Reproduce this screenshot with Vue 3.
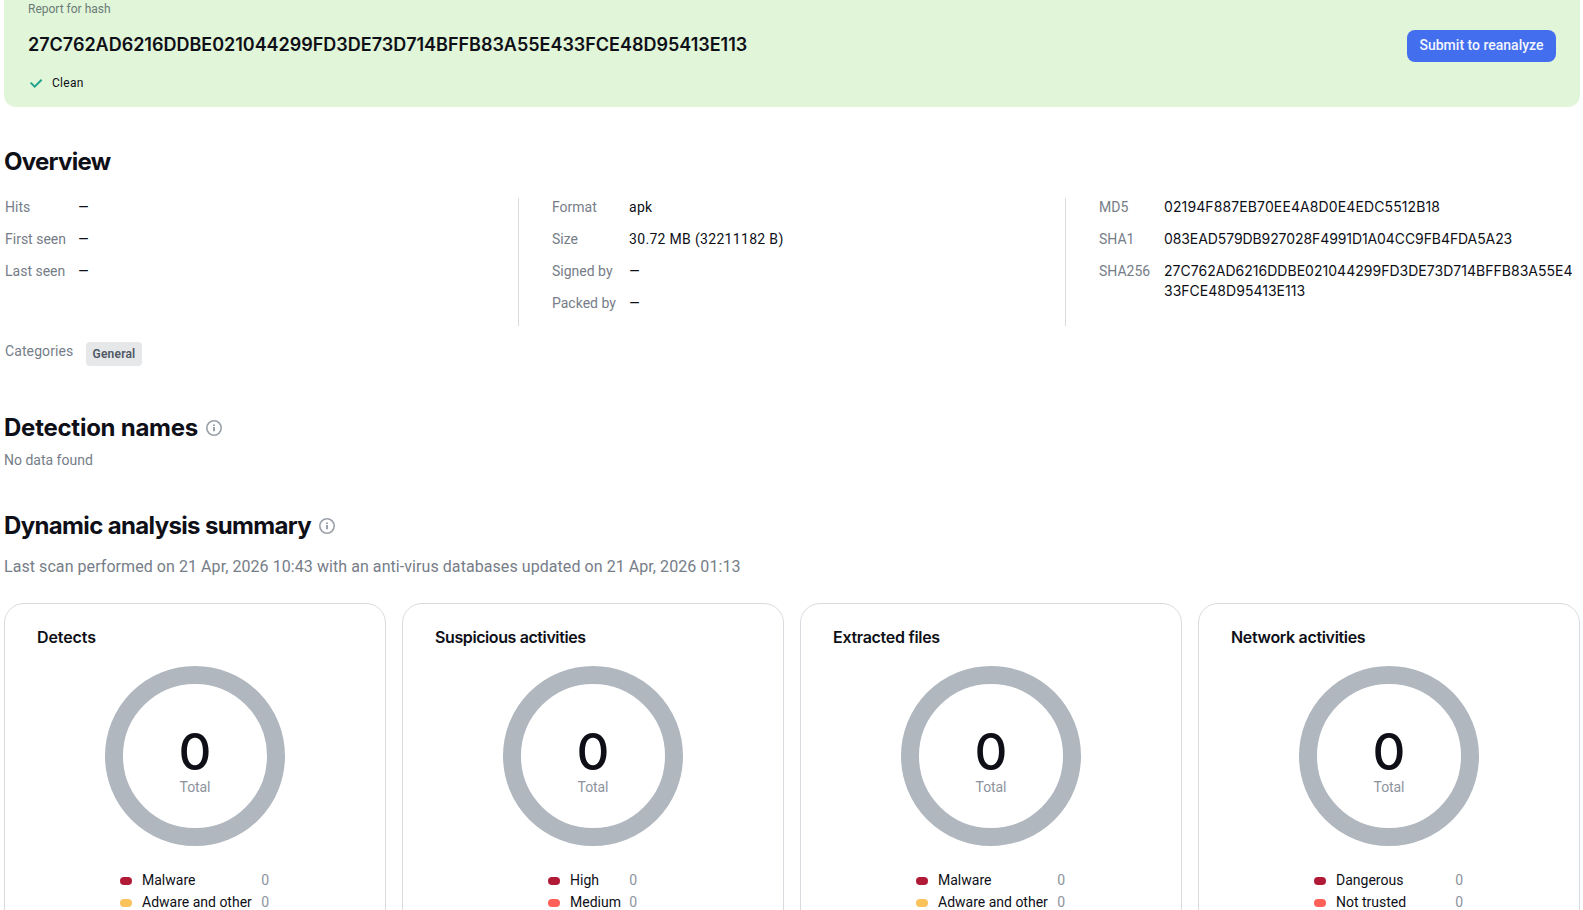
<template>
  <div class="page">
    <!-- 报告头部 -->
    <header class="report-header">
      <div class="report-info">
        <div class="report-label">Report for hash</div>
        <div class="report-hash">{{ hash }}</div>
        <div class="report-status">
          <svg class="check-icon" width="16" height="16" viewBox="0 0 16 16" fill="none">
            <path d="M2.6 7.6L6.7 11.6L13.6 4.8" stroke="#1fa38b" stroke-width="2" />
          </svg>
          <span>Clean</span>
        </div>
      </div>
      <button class="submit-btn">Submit to reanalyze</button>
    </header>

    <section class="overview">
      <h2 class="overview-title">Overview</h2>
      <div class="overview-columns">
        <dl v-for="(column, i) in overview" :key="i" class="column" :class="'column-' + (i + 1)">
          <div v-for="item in column" :key="item.label" class="row">
            <dt>{{ item.label }}</dt>
            <dd :class="{ checksum: item.spacing !== undefined }" :style="{ letterSpacing: item.spacing && item.spacing + 'px' }">
              <span v-if="item.value">{{ item.value }}</span>
              <span v-else class="empty">—</span>
            </dd>
          </div>
        </dl>
      </div>
      <div class="categories">
        <span class="categories-label">Categories</span>
        <span class="tag">General</span>
      </div>
    </section>

    <section class="detection">
      <div class="title-row">
        <h2 class="detection-title">Detection names</h2>
        <svg class="info-icon" width="16" height="16" viewBox="0 0 16 16" fill="none">
          <circle cx="8" cy="8" r="7.2" stroke="#9aa1aa" stroke-width="1.6" />
          <path d="M8 7V11.2M8 4.6V6" stroke="#9aa1aa" stroke-width="2" />
        </svg>
      </div>
      <p class="no-data">No data found</p>
    </section>

    <section class="dynamic">
      <div class="title-row">
        <h2 class="dynamic-title">Dynamic analysis summary</h2>
        <svg class="info-icon" width="16" height="16" viewBox="0 0 16 16" fill="none">
          <circle cx="8" cy="8" r="7.2" stroke="#9aa1aa" stroke-width="1.6" />
          <path d="M8 7V11.2M8 4.6V6" stroke="#9aa1aa" stroke-width="2" />
        </svg>
      </div>
      <p class="scan-info">
        Last scan performed on 21 Apr, 2026 10:43 with an anti-virus databases updated on 21 Apr, 2026 01:13
      </p>

      <div class="cards">
        <div v-for="card in cards" :key="card.title" class="card">
          <h3 class="card-title" :style="{ letterSpacing: card.spacing + 'px' }">{{ card.title }}</h3>
          <div class="donut">
            <span class="donut-value">{{ card.total }}</span>
            <span class="donut-label">Total</span>
          </div>
          <ul class="legend" :class="{ narrow: card.narrow }">
            <li v-for="item in card.items" :key="item.name">
              <i class="dot" :class="item.level"></i>
              <span class="legend-name">{{ item.name }}</span>
              <span class="legend-count">{{ item.count }}</span>
            </li>
          </ul>
        </div>
      </div>
    </section>
  </div>
</template>

<script setup>
const hash = '27C762AD6216DDBE021044299FD3DE73D714BFFB83A55E433FCE48D95413E113';

const overview = [
  [
    { label: 'Hits' },
    { label: 'First seen' },
    { label: 'Last seen' },
  ],
  [
    { label: 'Format', value: 'apk' },
    { label: 'Size', value: '30.72 MB (32211182 B)' },
    { label: 'Signed by' },
    { label: 'Packed by' },
  ],
  [
    { label: 'MD5', value: '02194F887EB70EE4A8D0E4EDC5512B18', spacing: 0.111 },
    { label: 'SHA1', value: '083EAD579DB927028F4991D1A04CC9FB4FDA5A23', spacing: -0.089 },
    { label: 'SHA256', value: hash, spacing: 0.021 },
  ],
];

const cards = [
  {
    title: 'Detects',
    total: 0,
    spacing: -0.1,
    items: [
      { name: 'Malware', count: 0, level: 'danger' },
      { name: 'Adware and other', count: 0, level: 'adware' },
    ],
  },
  {
    title: 'Suspicious activities',
    total: 0,
    spacing: -0.4,
    narrow: true,
    items: [
      { name: 'High', count: 0, level: 'danger' },
      { name: 'Medium', count: 0, level: 'medium' },
    ],
  },
  {
    title: 'Extracted files',
    total: 0,
    spacing: -0.3,
    items: [
      { name: 'Malware', count: 0, level: 'danger' },
      { name: 'Adware and other', count: 0, level: 'adware' },
    ],
  },
  {
    title: 'Network activities',
    total: 0,
    spacing: -0.33,
    items: [
      { name: 'Dangerous', count: 0, level: 'danger' },
      { name: 'Not trusted', count: 0, level: 'medium' },
    ],
  },
];
</script>

<style>
body {
  margin: 0;
  background: #fff;
  overflow: hidden;
}
</style>

<style scoped>
.page {
  box-sizing: border-box;
  width: 1583px;
  height: 910px;
  padding: 0 3px 0 4px;
  overflow: hidden;
  font-family: Roboto, 'Liberation Sans', sans-serif;
  font-size: 14px;
  line-height: 20px;
  color: #0e0f17;
}

h2,
h3,
p,
dl,
dd,
ul {
  margin: 0;
  padding: 0;
}

/* 头部 */
.report-header {
  box-sizing: border-box;
  display: flex;
  align-items: flex-start;
  justify-content: space-between;
  height: 107px;
  padding: 1px 24px 0;
  background: #e1f5d8;
  border-radius: 0 0 12px 12px;
}

.report-label {
  font-size: 12px;
  line-height: 16px;
  color: #6b7b78;
}

.report-hash {
  margin-top: 16px;
  font-family: Inter, Roboto, sans-serif;
  font-size: 18px;
  font-weight: 600;
  line-height: 24px;
  letter-spacing: -0.015px;
}

.report-status {
  display: flex;
  align-items: center;
  gap: 8px;
  margin-top: 18px;
  font-size: 12px;
  line-height: 16px;
  letter-spacing: 0.3px;
}

.submit-btn {
  width: 149px;
  height: 32px;
  margin-top: 29px;
  padding: 0 0 2px;
  border: none;
  border-radius: 8px;
  background: #436fee;
  color: #f2f5fe;
  font-family: inherit;
  font-size: 14px;
  font-weight: 500;
}

/* 概览 */
h2 {
  font-family: Inter, Roboto, sans-serif;
  font-size: 24px;
  font-weight: 650;
  line-height: 32px;
}

.overview-title {
  margin-top: 39px;
  letter-spacing: -0.72px;
}

.overview-columns {
  display: flex;
  margin-top: 20px;
}

.column {
  box-sizing: border-box;
  height: 128px;
}

.column-1 {
  width: 514px;
  padding-left: 1px;
}

.column-2 {
  width: 547px;
  padding-left: 33px;
  border-left: 1px solid #d8dbe0;
}

.column-3 {
  flex: 1;
  padding: 0 3px 0 33px;
  border-left: 1px solid #d8dbe0;
}

.row {
  display: flex;
  margin-bottom: 12px;
}

.row:first-child {
  margin-top: -1px;
}

dt {
  flex: none;
  color: #767d88;
}

.column-1 dt {
  width: 73px;
}

.column-2 dt {
  width: 77px;
}

.column-3 dt {
  width: 65px;
}

dd {
  letter-spacing: 0.32px;
  word-break: break-all;
}

.checksum {
  font-family: Inter, Roboto, sans-serif;
}

.empty {
  display: inline-block;
  transform: scaleX(0.95);
}

.categories {
  display: flex;
  align-items: flex-start;
  margin-top: 15px;
  padding-left: 1px;
  color: #767d88;
}

.categories-label {
  width: 81px;
  letter-spacing: 0.1px;
}

.tag {
  box-sizing: border-box;
  width: 56px;
  height: 24px;
  margin-top: 1px;
  border-radius: 4px;
  background: #e5e7e9;
  color: #4f5663;
  font-size: 12px;
  font-weight: 600;
  line-height: 24px;
  letter-spacing: 0.19px;
  text-align: center;
}

/* 检测名称 */
.detection {
  margin-top: 46px;
}

.title-row {
  display: flex;
  align-items: center;
}

.info-icon {
  margin-left: 8px;
}

.detection-title {
  letter-spacing: -0.25px;
}

.no-data {
  margin-top: 6px;
  color: #767d88;
}

/* 动态分析 */
.dynamic {
  margin-top: 40px;
}

.dynamic-title {
  letter-spacing: -0.65px;
}

.scan-info {
  margin-top: 13px;
  color: #767d88;
  font-size: 16px;
  line-height: 24px;
  letter-spacing: 0.065px;
}

.cards {
  display: flex;
  gap: 16px;
  margin-top: 24px;
}

.card {
  box-sizing: border-box;
  width: 382px;
  height: 420px;
  padding: 21px 32px 0;
  border: 1px solid #d8dbe0;
  border-radius: 20px;
}

.card-title {
  font-family: Inter, Roboto, sans-serif;
  font-size: 16px;
  font-weight: 600;
  line-height: 24px;
}

.donut {
  box-sizing: border-box;
  display: flex;
  flex-direction: column;
  align-items: center;
  width: 180px;
  height: 180px;
  margin: 17px auto 0;
  padding-top: 38px;
  border: 18px solid #b0b7bf;
  border-radius: 50%;
}

.donut-value {
  font-family: Inter, Roboto, sans-serif;
  font-size: 51px;
  font-weight: 500;
  line-height: 60px;
}

.donut-label {
  margin-top: -5px;
  color: #8d939d;
  letter-spacing: -0.1px;
}

.legend {
  width: 150px;
  margin: 23px auto 0;
  list-style: none;
}

.legend.narrow {
  width: 90px;
}

.legend li {
  display: flex;
  align-items: center;
  height: 22px;
}

.dot {
  width: 12px;
  height: 8px;
  margin: 2px 10px 0 0;
  border-radius: 4px;
}

.danger {
  background: #b01a37;
}

.adware {
  background: #f9c25b;
}

.medium {
  background: #ff6058;
}

.legend-name {
  flex: 1;
  white-space: nowrap;
}

.legend-count {
  padding-right: 1px;
  color: #8d939d;
}
</style>
